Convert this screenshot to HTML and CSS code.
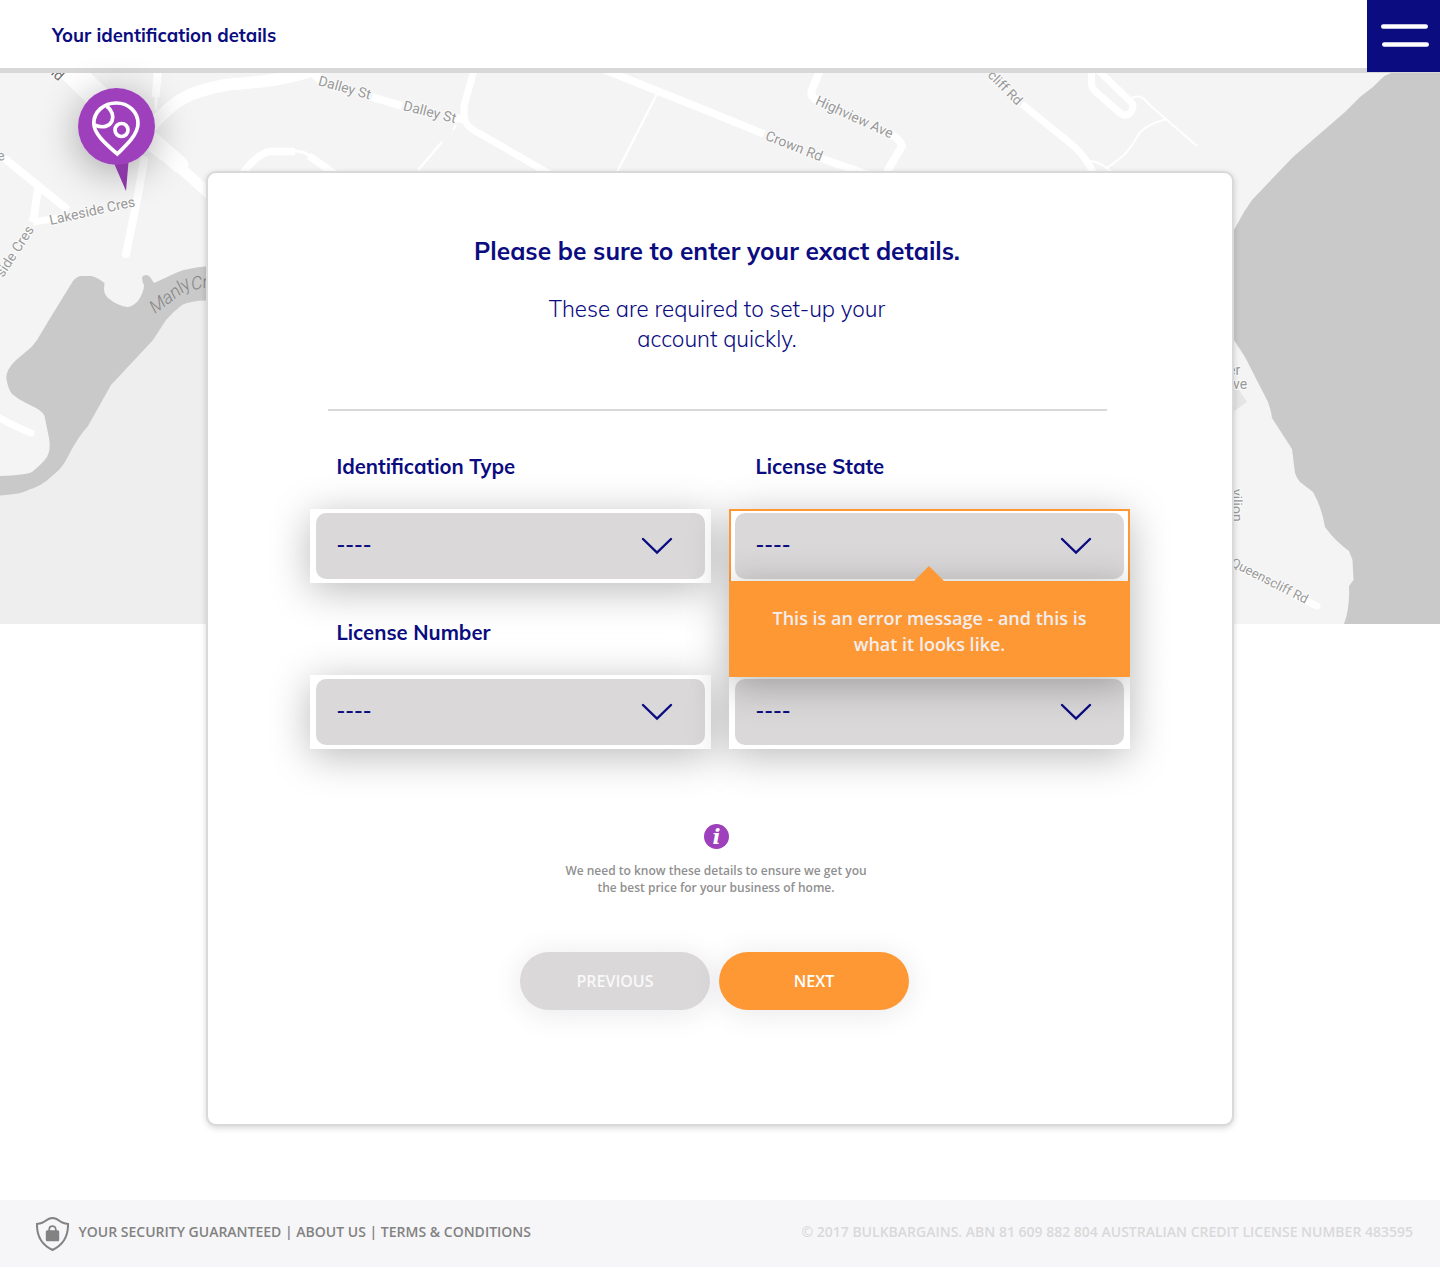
FILE: index.html
```html
<!DOCTYPE html>
<html lang="en">
<head>
<meta charset="utf-8">
<title>Your identification details</title>
<link rel="stylesheet" href="styles.css">
</head>
<body>
<div class="page">
  <header class="topbar">
    <h1 class="topbar-title">Your identification details</h1>
    <button class="menu" aria-label="Menu">
      <svg width="73" height="72" viewBox="0 0 73 72"><path d="M16.3 26.5H58.7M17.3 44.5H59.7" stroke="#fff" stroke-width="4.6" stroke-linecap="round"/></svg>
    </button>
  </header>

  <svg class="map" viewBox="0 73 1440 551" width="1440" height="551" aria-hidden="true">
    <rect x="0" y="73" width="1440" height="551" fill="#f4f4f4"/>
    <path fill="#eee" d="M0 490L40 480L110 380L180 303L206 295H300V624H0Z"/>
    <path fill="#c9c9c9" d="M210 266Q185 267 165 278L154 283L150 277Q146 273 142 277Q142 282 144 285Q144 292 138 301Q132 307 127 307Q118 306 108 298Q104 294 104 289L104.500 283Q97 277 91 276H82Q77 276 73 281L49 320L37 340Q33 346 28 350L15 361Q6 370 6.300 378Q8 389 12 394Q18 399 25 402.500L36 408Q42 411 44.500 416Q47 428 49 438Q51 450 47 457Q42 464 32 472Q26 475 0 476V495.500Q22 494 28 490Q42 486 52 476Q60 470 65 462L72 449Q79 436 88 426L111 385L153 340L166 320Q174 311 182 305Q192 300 210 300.500Z"/>
    <path fill="#c9c9c9" d="M1391 73Q1385 75 1381 79L1373 87L1360 97L1345 112L1293 157L1252 200L1244 212L1234 230V340L1245 357L1268 402Q1271 410 1272 418L1292 449L1295 473Q1297 479 1300 482L1313 492Q1322 508 1325 527Q1335 541 1349 551L1352.500 560L1353.500 580L1349 586Q1350 608 1344 624H1440V73Z"/>
    <path fill="#e5e5e5" d="M1230 390H1239L1247 402L1230 414Z"/>
    <g fill="none" stroke="#fff" stroke-linejoin="round">
      <path stroke-width="24" d="M66 66L120 118"/>
      <path stroke-width="12" d="M140 136L165 156"/>
      <path stroke-width="17" stroke-linecap="round" d="M152 140L180 165"/>
      <path stroke-width="11" d="M175 163L215 199"/>
      <path stroke-width="12" d="M150 128C175 98 190 92 225 85C260 82 290 80 325 66"/>
      <path stroke-width="8" d="M158 70L155.500 97"/>
      <path stroke-width="3" d="M156 97V110"/>
      <path stroke-width="8" stroke-linecap="round" d="M144 160L138 195L126 254"/>
      <path stroke-width="8" d="M4 158L68 210M38 189L33 222"/>
      <path stroke-width="7" d="M33 222L60 218"/>
      <path stroke-width="7.500" d="M243 173Q256 155 269 151.500H295M309 156L338 176"/>
      <path stroke-width="3" d="M295 151Q305 151 312 158"/>
      <path stroke-width="7" stroke-linecap="round" d="M-4 416Q15 427 31 433"/>
      <path stroke-width="8" d="M313 73L322 82M372 97L402 106M452 118L463 119"/>
      <path stroke-width="7" d="M474 70L464 106V117Q465 125 475 131L550 174"/>
      <path stroke-width="2.300" d="M456 125L453 130M442 142L418 170M657 94L617 172"/>
      <path stroke-width="7.500" d="M605 70L640 84L700 108L764 134M820 158L869 175"/>
      <path stroke-width="8" d="M820 70L811.500 91V95Q812 98 820 102M890 134Q900 139 902 146L885 175"/>
      <path stroke-width="7" d="M1022 104L1070 143Q1085 155 1094 174"/>
      <path stroke-width="7" d="M1091.500 70V84Q1092 88 1096 92L1120 113Q1126 118 1131 112Q1135 106 1131 102L1098 70"/>
      <path stroke-width="2" d="M1132 98Q1140 94 1145 100L1152 107L1197 146M1167 119Q1143 125 1137 137Q1128 153 1119 159L1107 168M1090 161Q1102 162 1111 172"/>
      <path stroke-width="7" stroke-linecap="round" d="M1296 596L1317 606"/>
    </g>
    <g class="streets">
      <text transform="translate(317.500 85) rotate(15.500)">Dalley St</text>
      <text transform="translate(402.500 110) rotate(14)">Dalley St</text>
      <text transform="translate(764.500 139.500) rotate(21.500)">Crown Rd</text>
      <text transform="translate(814.500 104) rotate(24.500)">Highview Ave</text>
      <text font-size="13.500" transform="translate(987 76) rotate(45)">cliff Rd</text>
      <text transform="translate(50.500 225) rotate(-12.500)">Lakeside Cres</text>
      <text transform="translate(3 278) rotate(-57)">side Cres</text>
      <text transform="translate(-2 161) rotate(-10)">e</text>
      <text class="street-dark" transform="translate(47 71) rotate(42)">nd</text>
      <text transform="translate(1228 375)">er</text>
      <text transform="translate(1225.500 389)">ave</text>
      <text transform="translate(1232 489) rotate(89)">vilion</text>
      <text font-size="13" transform="translate(1230 565.500) rotate(27)">Queenscliff Rd</text>
      <text class="water" transform="translate(155 314) rotate(-37)">Manly</text>
      <text class="water" transform="translate(192 290) rotate(-9)">Cr</text>
    </g>
  </svg>

  <div class="marker">
    <svg width="77" height="104" viewBox="0 0 77 104" fill="none">
      <path fill="#8b37a6" d="M35.500 74L50.500 74L48 103Z"/>
      <circle cx="38.500" cy="38.500" r="38.500" fill="#9e3fbb"/>
      <g stroke="#fff" stroke-width="3.700">
        <path d="M39.300 66C31 58.500 16 47 15.800 35.500C15.800 23.500 26 15 38.200 15C50.500 15 60 24 60 35.500C60 47 47 58.500 39.300 66Z"/>
        <path d="M28.500 18C34 22 36 28 34 33C31.500 38.500 25 40.500 16.500 37"/>
        <circle cx="43.500" cy="42" r="6.500"/>
      </g>
    </svg>
  </div>

  <main class="card">
    <h2 class="heading">Please be sure to enter your exact details.</h2>
    <p class="lead">These are required to set-up your<br>account quickly.</p>
    <hr class="rule">
    <form class="fields">
      <div class="field">
        <label class="label">Identification Type</label>
        <div class="box"><div class="select"><span class="value">----</span><svg class="chevron" width="32" height="18" viewBox="0 0 32 18"><path d="M2 2L16 15.500L30 2"/></svg></div></div>
      </div>
      <div class="field">
        <label class="label">License State</label>
        <div class="box box-error"><div class="select"><span class="value">----</span><svg class="chevron" width="32" height="18" viewBox="0 0 32 18"><path d="M2 2L16 15.500L30 2"/></svg></div></div>
        <div class="error">This is an error message - and this is<br>what it looks like.</div>
      </div>
      <div class="field">
        <label class="label">License Number</label>
        <div class="box"><div class="select"><span class="value">----</span><svg class="chevron" width="32" height="18" viewBox="0 0 32 18"><path d="M2 2L16 15.500L30 2"/></svg></div></div>
      </div>
      <div class="field">
        <div class="box"><div class="select"><span class="value">----</span><svg class="chevron" width="32" height="18" viewBox="0 0 32 18"><path d="M2 2L16 15.500L30 2"/></svg></div></div>
      </div>
    </form>
    <div class="info">i</div>
    <p class="note">We need to know these details to ensure we get you<br>the best price for your business of home.</p>
    <div class="actions">
      <button class="btn btn-prev">PREVIOUS</button>
      <button class="btn btn-next">NEXT</button>
    </div>
  </main>

  <footer class="footer">
    <svg class="shield" width="33" height="34" viewBox="0 0 33 34" fill="none">
      <path stroke="#828282" stroke-width="2" d="M16.500 1C20.500 1 23 3.500 25.500 5.200C27.500 6.500 29.500 6.800 32 7C32.300 19 27 28 16.500 33C6 28 .7 19 1 7C3.500 6.800 5.500 6.500 7.500 5.200C10 3.500 12.500 1 16.500 1Z"/>
      <rect x="9.800" y="13.300" width="13.400" height="10.900" rx="1.500" fill="#828282"/>
      <path stroke="#828282" stroke-width="1.700" d="M13.200 14V12.500C13.200 8 19.800 8 19.800 12.500V14"/>
    </svg>
    <span class="links">YOUR SECURITY GUARANTEED | ABOUT US | TERMS &amp; CONDITIONS</span>
    <span class="legal">© 2017 BULKBARGAINS. ABN 81 609 882 804 AUSTRALIAN CREDIT LICENSE NUMBER 483595</span>
  </footer>
</div>
</body>
</html>
```
FILE: styles.css
```css
* { box-sizing: border-box; }

body {
  margin: 0;
  background: #fff;
  color: #0a0c80;
  font-family: Mulish, Muli, Lato, sans-serif;
}

h1, h2, p { margin: 0; }
button { border: 0; padding: 0; font: inherit; }
svg { display: block; }

.page {
  position: relative;
  width: 1440px;
  height: 1268px;
  overflow: hidden;
  display: flex;
  flex-direction: column;
}

.topbar {
  height: 73px;
  flex: none;
  display: flex;
  justify-content: space-between;
  border-bottom: 5px solid #d9d8d9;
  background: #fff;
}

.topbar-title {
  padding-left: 52px;
  font-size: 18.5px;
  font-weight: 700;
  line-height: 71px;
}

.menu {
  width: 73px;
  height: 72px;
  background: #0a0c80;
}

/* The map sits behind the card. */
.map {
  position: absolute;
  left: 0;
  top: 73px;
}

.streets {
  font-family: Roboto, sans-serif;
  font-size: 14px;
  fill: #999;
  stroke: #fff;
  stroke-opacity: .7;
  stroke-width: 2px;
  paint-order: stroke;
}
.streets .street-dark { fill: #666; }
.streets .water { font-size: 18px; font-style: italic; font-weight: 300; fill: #858585; stroke: none; }

.marker {
  position: absolute;
  left: 78px;
  top: 88px;
  width: 77px;
  height: 77px;
  border-radius: 50%;
  box-shadow: 0 7px 40px rgba(0, 0, 0, .33);
}

.card {
  position: relative;
  flex: none;
  display: flex;
  flex-direction: column;
  align-items: center;
  width: 1028px;
  height: 955px;
  margin: 98px auto 0;
  padding-top: 62px;
  border: 2px solid #d9d9d9;
  border-radius: 10px;
  background: #fff;
  box-shadow: 0 2px 6px rgba(0, 0, 0, .16);
}

.heading {
  margin-right: 6px;
  font-size: 24.5px;
  font-weight: 700;
  line-height: 32px;
}

.lead {
  margin: 27px 6px 0 0;
  font-size: 22.3px;
  font-weight: 300;
  line-height: 30px;
  text-align: center;
}

.rule {
  width: 779px;
  height: 2px;
  margin: 55px 5px 0 0;
  border: 0;
  background: #d9d9d9;
}

.fields {
  display: grid;
  grid-template-columns: 401px 401px;
  grid-template-rows: 132px 132px;
  gap: 34px 18px;
  margin-top: 40px;
}

.field {
  position: relative;
  display: flex;
  flex-direction: column;
  justify-content: flex-end;
}

.label {
  height: 58px;
  padding-left: 26.4px;
  font-size: 20.3px;
  font-weight: 700;
  line-height: 32px;
}

.box {
  height: 74px;
  padding: 4px 6px;
  background: #fff;
  box-shadow: 0 7px 40px rgba(0, 0, 0, .28);
}

.box-error {
  padding: 2px 4px;
  border: 2px solid #fd9835;
}

.select {
  display: flex;
  align-items: center;
  justify-content: space-between;
  height: 65.5px;
  padding: 0 32px 0 20.4px;
  border-radius: 10px;
  background: #dad8d9;
}

.value {
  margin-bottom: 4px;
  font-size: 20px;
  font-weight: 700;
}

.chevron {
  fill: none;
  stroke: #0a0c80;
  stroke-width: 2.4;
  stroke-linecap: round;
}

.error {
  position: absolute;
  z-index: 2;
  left: 0;
  right: 0;
  top: 130px;
  height: 96px;
  padding-top: 24px;
  background: #fd9835;
  color: #f3eeee;
  font-family: "Open Sans", sans-serif;
  font-size: 18px;
  font-weight: 600;
  line-height: 26px;
  text-align: center;
  box-shadow: 0 7px 40px rgba(0, 0, 0, .3);
}

.error::before {
  content: "";
  position: absolute;
  left: 185px;
  top: -15px;
  border: solid transparent;
  border-width: 0 15.5px 15px;
  border-bottom-color: #fd9835;
}

.info {
  width: 25px;
  height: 25px;
  margin: 75px 7px 0 0;
  border-radius: 50%;
  background: #9e3fbb;
  color: #fff;
  font: italic 700 21px/25px "DejaVu Serif", serif;
  text-align: center;
}

.note {
  margin: 13px 8px 0 0;
  color: #909090;
  font-family: "Open Sans", sans-serif;
  font-size: 12px;
  font-weight: 600;
  line-height: 17px;
  text-align: center;
}

.actions {
  display: flex;
  gap: 9px;
  margin: 56px 11px 0 0;
}

.btn {
  width: 190px;
  height: 58px;
  border-radius: 29px;
  font-family: "Open Sans", sans-serif;
  font-size: 16px;
  font-weight: 600;
  box-shadow: 0 3px 30px rgba(30, 30, 60, .1);
}

.btn-prev { background: #dad8d9; color: #f9f9f9; }
.btn-next { background: #fd9835; color: #fff; }

.footer {
  display: flex;
  align-items: center;
  flex: none;
  height: 67px;
  margin-top: 74px;
  padding: 0 27px 4px 36px;
  background: #f6f6f8;
  font-family: "Open Sans", sans-serif;
  font-size: 14px;
  font-weight: 600;
}

.shield { margin-top: 4px; }
.links { margin-left: 9.5px; color: #828282; }
.legal { margin-left: auto; color: #d9d9d9; }
```
